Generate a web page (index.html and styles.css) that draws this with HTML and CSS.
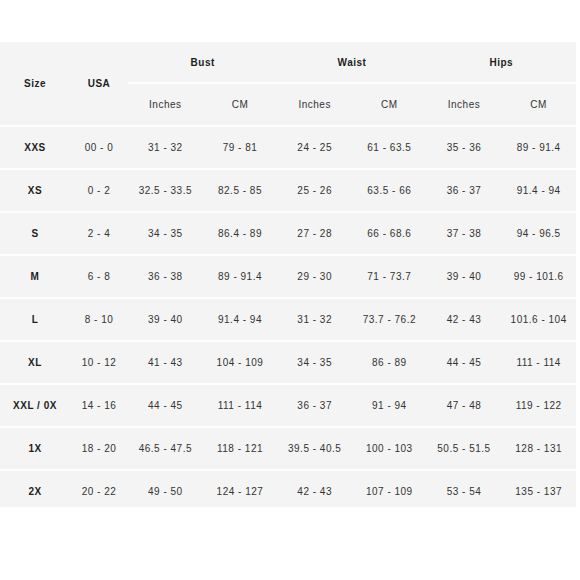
FILE: index.html
```html
<!DOCTYPE html>
<html>
<head>
<meta charset="utf-8">
<link rel="stylesheet" href="styles.css">
</head>
<body>
<table class="size-table">
  <colgroup>
    <col class="c-size"><col class="c-usa">
    <col class="c-m"><col class="c-m"><col class="c-m"><col class="c-m"><col class="c-m"><col class="c-m">
  </colgroup>
  <thead>
    <tr class="h1">
      <th rowspan="2" class="hcell">Size</th>
      <th rowspan="2" class="hcell">USA</th>
      <th colspan="2" class="hgroup">Bust</th>
      <th colspan="2" class="hgroup">Waist</th>
      <th colspan="2" class="hgroup">Hips</th>
    </tr>
    <tr class="h2">
      <th class="sub">Inches</th><th class="sub">CM</th>
      <th class="sub">Inches</th><th class="sub">CM</th>
      <th class="sub">Inches</th><th class="sub">CM</th>
    </tr>
  </thead>
  <tbody>
    <tr><td class="sz">XXS</td><td>00 - 0</td><td>31 - 32</td><td>79 - 81</td><td>24 - 25</td><td>61 - 63.5</td><td>35 - 36</td><td>89 - 91.4</td></tr>
    <tr><td class="sz">XS</td><td>0 - 2</td><td>32.5 - 33.5</td><td>82.5 - 85</td><td>25 - 26</td><td>63.5 - 66</td><td>36 - 37</td><td>91.4 - 94</td></tr>
    <tr><td class="sz">S</td><td>2 - 4</td><td>34 - 35</td><td>86.4 - 89</td><td>27 - 28</td><td>66 - 68.6</td><td>37 - 38</td><td>94 - 96.5</td></tr>
    <tr><td class="sz">M</td><td>6 - 8</td><td>36 - 38</td><td>89 - 91.4</td><td>29 - 30</td><td>71 - 73.7</td><td>39 - 40</td><td>99 - 101.6</td></tr>
    <tr><td class="sz">L</td><td>8 - 10</td><td>39 - 40</td><td>91.4 - 94</td><td>31 - 32</td><td>73.7 - 76.2</td><td>42 - 43</td><td>101.6 - 104</td></tr>
    <tr><td class="sz">XL</td><td>10 - 12</td><td>41 - 43</td><td>104 - 109</td><td>34 - 35</td><td>86 - 89</td><td>44 - 45</td><td>111 - 114</td></tr>
    <tr><td class="sz">XXL / 0X</td><td>14 - 16</td><td>44 - 45</td><td>111 - 114</td><td>36 - 37</td><td>91 - 94</td><td>47 - 48</td><td>119 - 122</td></tr>
    <tr><td class="sz">1X</td><td>18 - 20</td><td>46.5 - 47.5</td><td>118 - 121</td><td>39.5 - 40.5</td><td>100 - 103</td><td>50.5 - 51.5</td><td>128 - 131</td></tr>
    <tr class="last"><td class="sz">2X</td><td>20 - 22</td><td>49 - 50</td><td>124 - 127</td><td>42 - 43</td><td>107 - 109</td><td>53 - 54</td><td>135 - 137</td></tr>
  </tbody>
</table>
</body>
</html>
```
FILE: styles.css
```css
html, body {
  margin: 0;
  padding: 0;
  background: #ffffff;
}
body {
  padding-top: 42px;
  font-family: "Liberation Sans", Arial, sans-serif;
  font-size: 10px;
  letter-spacing: 0.5px;
  color: #333333;
}
.size-table {
  width: 576px;
  table-layout: fixed;
  border-collapse: separate;
  border-spacing: 0;
  background: #f4f4f4;
}
.c-size { width: 70px; }
.c-usa { width: 58px; }
.c-m { width: 74.66px; }
th, td {
  padding: 0;
  text-align: center;
  vertical-align: middle;
  box-sizing: border-box;
  border-bottom: 2px solid #fdfdfd;
  white-space: nowrap;
}
th {
  font-weight: bold;
  color: #1e1e1e;
}
.h1 th.hgroup {
  height: 42px;
}
.h2 th {
  height: 43px;
}
th.sub {
  font-weight: normal;
  color: #333333;
}
td {
  height: 43px;
}
td.sz {
  font-weight: bold;
  color: #1e1e1e;
}
tr.last td {
  height: 36px;
  border-bottom: none;
  padding-top: 5px;
}
```
